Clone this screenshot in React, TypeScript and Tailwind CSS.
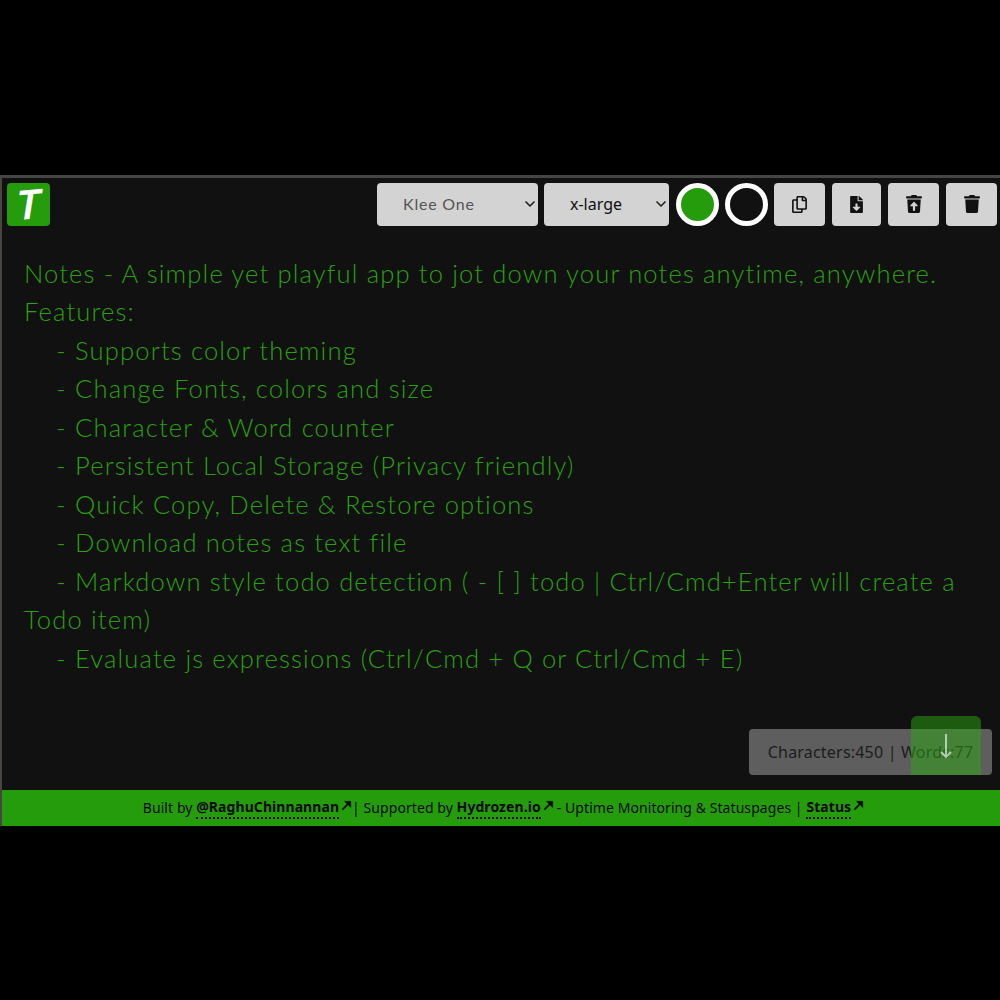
import { FaFileDownload, FaRegCopy, FaTrash, FaTrashRestore } from 'react-icons/fa';
import { ChevronDown } from 'lucide-react';

const lines = [
  'Notes - A simple yet playful app to jot down your notes anytime, anywhere.',
  'Features:',
  '    - Supports color theming',
  '    - Change Fonts, colors and size',
  '    - Character & Word counter',
  '    - Persistent Local Storage (Privacy friendly)',
  '    - Quick Copy, Delete & Restore options',
  '    - Download notes as text file',
  '    - Markdown style todo detection ( - [ ] todo | Ctrl/Cmd+Enter will create a Todo item)',
  '    - Evaluate js expressions (Ctrl/Cmd + Q or Ctrl/Cmd + E)',
];

function Select({ label, width, light }: { label: string; width: string; light?: boolean }) {
  return (
    <div className={`flex h-[43px] items-center justify-between rounded-[4px] bg-[#d3d3d3] pl-[26px] ${width} ${light ? "font-['Lato'] tracking-[0.8px] text-[#555]" : 'text-[#111]'}`}>
      <span className="text-[16px]">{label}</span>
      <ChevronDown size={16} strokeWidth={2.5} className="text-[#222]" />
    </div>
  );
}

function IconButton({ children, width }: { children: React.ReactNode; width: string }) {
  return <button className={`flex h-[43px] items-center justify-center rounded-[4px] bg-[#d3d3d3] text-[#111] ${width}`}>{children}</button>;
}

function Ext({ label }: { label: string }) {
  return (
    <>
      <span className="border-b-2 border-dotted border-[#0a0a0a] font-bold">{label}</span>
      <svg viewBox="0 0 12 12" className="mb-[4px] ml-[2px] inline-block h-[11px] w-[11px]" fill="none" stroke="#0a0a0a" strokeWidth="1.8">
        <path d="M1.5 10.5 8.5 3.5" />
        <path d="M4 1.5h6.5V8z" fill="#0a0a0a" strokeWidth="0.8" />
      </svg>
    </>
  );
}

export default function App() {
  return (
    <div className="flex h-screen flex-col justify-center bg-black font-['Noto_Sans','Liberation_Sans',sans-serif]">
      <div className="relative flex h-[651px] flex-col border-t-[3px] border-l-2 border-t-[#454545] border-l-[#4a4540] bg-[#111]">
        <header className="flex items-start justify-between pt-[5px] pr-[3px] pl-[5px]">
          <div className="flex h-[43px] w-[43px] items-center justify-center rounded-[4px] bg-[#259c0c]">
            <span className="-rotate-[5deg] -skew-x-[14deg] font-['Lato'] text-[40px] leading-none font-bold text-white">T</span>
          </div>
          <div className="flex items-center">
            <Select label="Klee One" width="w-[161px]" light />
            <div className="ml-[6px]">
              <Select label="x-large" width="w-[125px]" />
            </div>
            <div className="ml-[7px] h-[43px] w-[43px] rounded-full border-[5px] border-white bg-[#259c0c]" />
            <div className="ml-[6px] h-[43px] w-[43px] rounded-full border-[5px] border-white bg-[#111]" />
            <div className="ml-[6px] flex items-center gap-[7px]">
              <IconButton width="w-[51px]"><FaRegCopy size={17} /></IconButton>
              <IconButton width="w-[49px]"><FaFileDownload size={17} /></IconButton>
              <IconButton width="w-[51px]"><FaTrashRestore size={18} /></IconButton>
              <IconButton width="w-[51px]"><FaTrash size={18} /></IconButton>
            </div>
          </div>
        </header>
        <main className="flex-1 pt-[28px] pr-[22px] pl-[22px] font-['Lato'] text-[25.6px] leading-[38.5px] font-light tracking-[1.14px] whitespace-pre-wrap text-[#2aa010]">
          {lines.map((line) => (
            <div key={line}>{line}</div>
          ))}
        </main>
        <div className="absolute top-[551px] right-[8px] flex h-[46px] w-[243px] items-center justify-center rounded-[4px] bg-[#d3d3d3]/40 text-[16px] tracking-[0.2px] text-[#1c1c1c]">
          Characters:450 | Words:77
        </div>
        <div className="absolute top-[538px] right-[19px] flex h-[59px] w-[70px] justify-center rounded-t-[6px] bg-[#2aa810]/50 pt-[17px] text-white/60">
          <svg viewBox="0 0 12 26" className="h-[26px] w-[12px]" fill="none" stroke="currentColor" strokeWidth="2">
            <path d="M6 1v23M1 19l5 5 5-5" />
          </svg>
        </div>
        <footer className="flex h-[36px] items-center justify-center bg-[#259c0c] pl-[5px] text-[14px] tracking-[0.07px] whitespace-pre text-[#0a0a0a]">
          <span>Built by </span>
          <Ext label="@RaghuChinnannan" />
          <span>| Supported by </span>
          <Ext label="Hydrozen.io" />
          <span className="ml-[3px]">- Uptime Monitoring & Statuspages | </span>
          <Ext label="Status" />
        </footer>
      </div>
    </div>
  );
}
